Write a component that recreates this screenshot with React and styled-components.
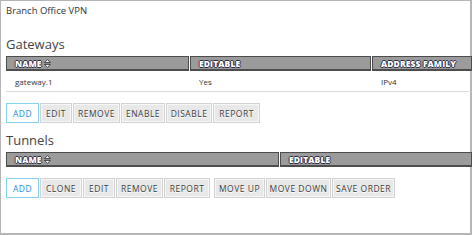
import React from "react";
import styled, { createGlobalStyle } from "styled-components";

const GlobalStyle = createGlobalStyle`
  html, body {
    margin: 0;
    padding: 0;
    background: #fff;
    overflow: hidden;
  }
  body {
    font-family: "Open Sans", "Liberation Sans", sans-serif;
    color: #333;
  }
`;

const gateways = [{ name: "gateway.1", editable: "Yes", family: "IPv4" }];

function SortIcon() {
  return (
    <svg width="7" height="9" viewBox="0 0 7 9">
      <path d="M3.5 0.6 L6.4 3.6 L0.6 3.6 Z" fill="#fff" stroke="#333" strokeWidth="0.9" />
      <path d="M3.5 8.4 L6.4 5.4 L0.6 5.4 Z" fill="#fff" stroke="#333" strokeWidth="0.9" />
    </svg>
  );
}

function App() {
  return (
    <>
      <GlobalStyle />
      <Frame>
        <PageTitle>Branch Office VPN</PageTitle>

        <SectionTitle $top={19}>Gateways</SectionTitle>
        <HeaderRow $cols="183px 181px 1fr">
          <HeaderCell>
            NAME <SortIcon />
          </HeaderCell>
          <HeaderCell>EDITABLE</HeaderCell>
          <HeaderCell>ADDRESS FAMILY</HeaderCell>
        </HeaderRow>
        {gateways.map((g) => (
          <DataRow key={g.name} $cols="183px 181px 1fr">
            <DataCell>{g.name}</DataCell>
            <DataCell>{g.editable}</DataCell>
            <DataCell>{g.family}</DataCell>
          </DataRow>
        ))}
        <Toolbar $top={11}>
          <Group>
            <ToolButton $primary $w={33}>ADD</ToolButton>
            <ToolButton $w={32}>EDIT</ToolButton>
            <ToolButton $w={47}>REMOVE</ToolButton>
            <ToolButton $w={44}>ENABLE</ToolButton>
            <ToolButton $w={46}>DISABLE</ToolButton>
            <ToolButton $w={47}>REPORT</ToolButton>
          </Group>
        </Toolbar>

        <SectionTitle $top={9}>Tunnels</SectionTitle>
        <HeaderRow $cols="273px 1fr">
          <HeaderCell>
            NAME <SortIcon />
          </HeaderCell>
          <HeaderCell>EDITABLE</HeaderCell>
        </HeaderRow>
        <Toolbar $top={11}>
          <Group>
            <ToolButton $primary $w={33}>ADD</ToolButton>
            <ToolButton $w={42}>CLONE</ToolButton>
            <ToolButton $w={32}>EDIT</ToolButton>
            <ToolButton $w={47}>REMOVE</ToolButton>
            <ToolButton $w={46}>REPORT</ToolButton>
          </Group>
          <Group>
            <ToolButton $w={51}>MOVE UP</ToolButton>
            <ToolButton $w={65}>MOVE DOWN</ToolButton>
            <ToolButton $w={63}>SAVE ORDER</ToolButton>
          </Group>
        </Toolbar>
      </Frame>
    </>
  );
}

// STYLES
const Frame = styled.div`
  box-sizing: border-box;
  width: 472px;
  height: 235px;
  border: 1px solid #b5b5b5;
  border-right-width: 2px;
  border-bottom-width: 2px;
  padding: 4px 0 0 5px;
  display: flex;
  flex-direction: column;
`;

const PageTitle = styled.div`
  font-size: 9.5px;
  line-height: 12px;
  color: #333;
`;

const SectionTitle = styled.div`
  margin-top: ${(p) => p.$top}px;
  font-size: 13px;
  line-height: 17px;
  color: #444;
  margin-bottom: 3px;
`;

const HeaderRow = styled.div`
  display: grid;
  grid-template-columns: ${(p) => p.$cols};
  column-gap: 1px;
  width: 466px;
  background: #fff;
  position: relative;
`;

const HeaderCell = styled.div`
  box-sizing: border-box;
  height: 15px;
  background: #9b9b9b;
  border: 1px solid #4d4d4d;
  border-bottom-width: 2px;
  padding-left: 8px;
  display: flex;
  align-items: center;
  gap: 2px;
  font-family: "Open Sans", "Liberation Sans", sans-serif;
  font-weight: 800;
  font-size: 8.5px;
  color: #fff;
  letter-spacing: 0.1px;
  text-shadow: -1px 0 #2e2e4a, 1px 0 #2e2e4a, 0 -1px #2e2e4a, 0 1px #2e2e4a;
`;

const DataRow = styled.div`
  display: grid;
  grid-template-columns: ${(p) => p.$cols};
  column-gap: 1px;
  width: 465px;
  height: 20px;
  border-bottom: 1px solid #dcdcdc;
`;

const DataCell = styled.div`
  padding-left: 9px;
  display: flex;
  align-items: center;
  font-size: 8px;
  color: #333;
`;

const Toolbar = styled.div`
  margin-top: ${(p) => p.$top}px;
  display: flex;
  gap: 4px;
`;

const Group = styled.div`
  display: flex;
  gap: 1px;
`;

const ToolButton = styled.button`
  box-sizing: border-box;
  width: ${(p) => p.$w}px;
  height: 20px;
  padding: 0;
  margin: 0;
  font-family: "Open Sans", "Liberation Sans", sans-serif;
  font-size: 8.5px;
  letter-spacing: 0.5px;
  cursor: pointer;
  color: ${(p) => (p.$primary ? "#1d8fd6" : "#3a3a3a")};
  background: ${(p) => (p.$primary ? "#fff" : "#e8e8e8")};
  border: 1px solid ${(p) => (p.$primary ? "#86d2ee" : "#d2d2d2")};
  box-shadow: ${(p) => (p.$primary ? "none" : "inset 0 0 0 1px #f6f6f6")};
  text-shadow: ${(p) => (p.$primary ? "none" : "0 1px 0 #fff")};
`;

export default App;
